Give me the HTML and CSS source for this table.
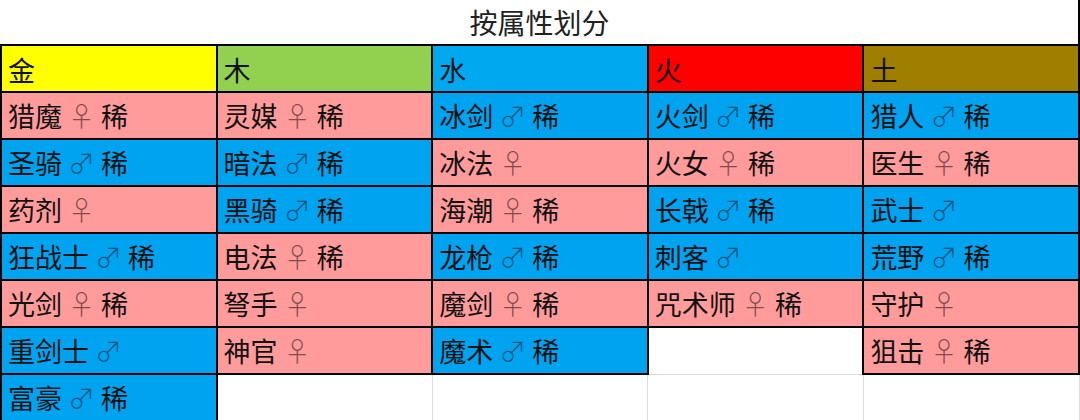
FILE: index.html
```html
<!DOCTYPE html>
<html lang="zh">
<head>
<meta charset="utf-8">
<link rel="stylesheet" href="styles.css">
</head>
<body>
<table class="sheet">
  <colgroup><col><col><col><col><col></colgroup>
  <tr class="title-row"><td colspan="5" class="title">按属性划分</td></tr>
  <tr class="row head">
    <td class="c h-gold">金</td><td class="c h-wood">木</td><td class="c h-water">水</td><td class="c h-fire">火</td><td class="c h-earth">土</td>
  </tr>
  <tr class="row">
    <td class="c f">猎魔 <span class="sx">♀</span> 稀</td>
    <td class="c f">灵媒 <span class="sx">♀</span> 稀</td>
    <td class="c m">冰剑 <span class="sx">♂</span> 稀</td>
    <td class="c m">火剑 <span class="sx">♂</span> 稀</td>
    <td class="c m">猎人 <span class="sx">♂</span> 稀</td>
  </tr>
  <tr class="row">
    <td class="c m">圣骑 <span class="sx">♂</span> 稀</td>
    <td class="c m">暗法 <span class="sx">♂</span> 稀</td>
    <td class="c f">冰法 <span class="sx">♀</span></td>
    <td class="c f">火女 <span class="sx">♀</span> 稀</td>
    <td class="c f">医生 <span class="sx">♀</span> 稀</td>
  </tr>
  <tr class="row">
    <td class="c f">药剂 <span class="sx">♀</span></td>
    <td class="c m">黑骑 <span class="sx">♂</span> 稀</td>
    <td class="c f">海潮 <span class="sx">♀</span> 稀</td>
    <td class="c m">长戟 <span class="sx">♂</span> 稀</td>
    <td class="c m">武士 <span class="sx">♂</span></td>
  </tr>
  <tr class="row">
    <td class="c m">狂战士 <span class="sx">♂</span> 稀</td>
    <td class="c f">电法 <span class="sx">♀</span> 稀</td>
    <td class="c m">龙枪 <span class="sx">♂</span> 稀</td>
    <td class="c m">刺客 <span class="sx">♂</span></td>
    <td class="c m">荒野 <span class="sx">♂</span> 稀</td>
  </tr>
  <tr class="row">
    <td class="c f">光剑 <span class="sx">♀</span> 稀</td>
    <td class="c f">弩手 <span class="sx">♀</span></td>
    <td class="c f">魔剑 <span class="sx">♀</span> 稀</td>
    <td class="c f">咒术师 <span class="sx">♀</span> 稀</td>
    <td class="c f">守护 <span class="sx">♀</span></td>
  </tr>
  <tr class="row">
    <td class="c m">重剑士 <span class="sx">♂</span></td>
    <td class="c f">神官 <span class="sx">♀</span></td>
    <td class="c m">魔术 <span class="sx">♂</span> 稀</td>
    <td class="c e"></td>
    <td class="c f">狙击 <span class="sx">♀</span> 稀</td>
  </tr>
  <tr class="row">
    <td class="c m">富豪 <span class="sx">♂</span> 稀</td>
    <td class="c e"></td>
    <td class="c e"></td>
    <td class="c e"></td>
    <td class="c e"></td>
  </tr>
</table>
</body>
</html>
```
FILE: styles.css
```css
html, body {
  margin: 0;
  padding: 0;
  background: #ffffff;
}
body {
  width: 1080px;
  height: 420px;
  overflow: hidden;
  font-family: "Noto Sans CJK SC", "Noto Sans", sans-serif;
  color: #111;
}
.sheet {
  width: 1080px;
  border-collapse: collapse;
  table-layout: fixed;
}
.title-row td {
  height: 44px;
  padding: 0;
  text-align: center;
  font-size: 28px;
  line-height: 44px;
  color: #222;
  border-bottom: 1px solid #d4d4d4;
  border-right: 2px solid #000;
}
.row td {
  height: 45px;
}
.row.head td {
  height: 42px;
  padding-top: 3px;
}
.c {
  padding: 0 0 0 6px;
  font-size: 27px;
  line-height: 30px;
  white-space: nowrap;
  vertical-align: middle;
  border: 2px solid #000;
}
.h-gold { background: #ffff00; }
.h-wood { background: #92d050; }
.h-water { background: #00a8f0; }
.h-fire { background: #ff0000; }
.h-earth { background: #a07e00; }
.f { background: #ff9b9b; }
.m { background: #00a3ef; }
.e {
  background: #ffffff;
  border: 1px solid #dcdcdc;
}
.sx {
  font-family: "Noto Sans CJK SC", sans-serif;
  font-weight: 300;
  color: rgba(0, 0, 0, 0.5);
  font-size: 27px;
}
```
